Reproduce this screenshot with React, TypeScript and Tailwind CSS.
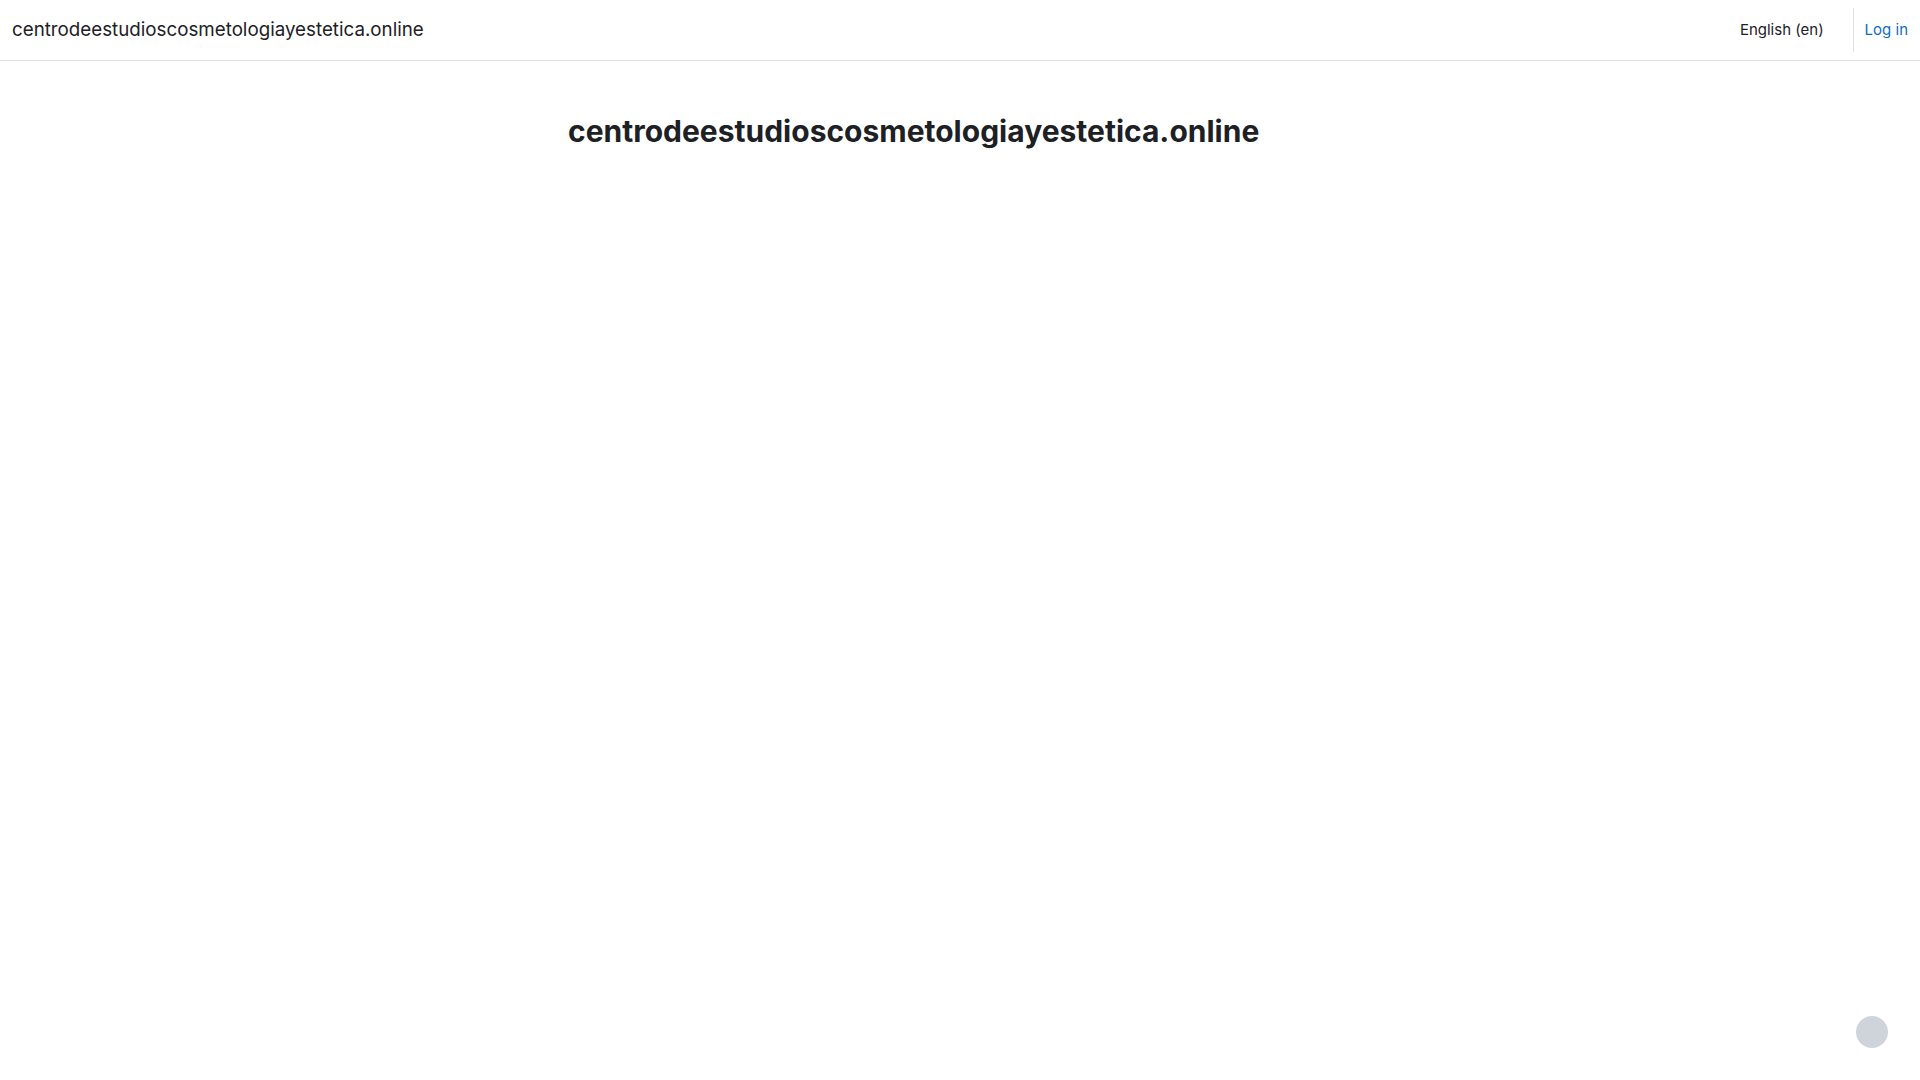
export default function App() {
  return (
    <div
      className="min-h-screen bg-white text-[#1d2125]"
      style={{ fontFamily: 'Inter, "Noto Sans", sans-serif' }}
    >
      {/* navbar */}
      <nav className="flex h-[61px] items-center border-b border-[#dee2e6] bg-white pl-3 pr-3">
        <a href="#" className="text-[18.75px] leading-none text-[#1d2125] no-underline">
          centrodeestudioscosmetologiayestetica.online
        </a>
        <div className="ml-auto flex h-full items-center">
          <div className="px-2 text-[15px] text-[#1d2125]">English ‎(en)‎</div>
          <div className="ml-[21px] mr-[11px] h-[44px] w-px bg-[#dee2e6]"></div>
          <a href="#" className="text-[15px] text-[#0f6cbf] no-underline">
            Log in
          </a>
        </div>
      </nav>

      {/* page header */}
      <div className="mx-auto w-[830px] pt-[52px]">
        <h1 className="pl-[23px] text-[30px] font-bold leading-[1.2] text-[#1d2125]">
          centrodeestudioscosmetologiayestetica.online
        </h1>
      </div>

      {/* footer popover button */}
      <button
        type="button"
        className="fixed bottom-8 right-8 h-8 w-8 rounded-full bg-[#ced4da]"
        aria-label="Show footer"
      ></button>
    </div>
  );
}
